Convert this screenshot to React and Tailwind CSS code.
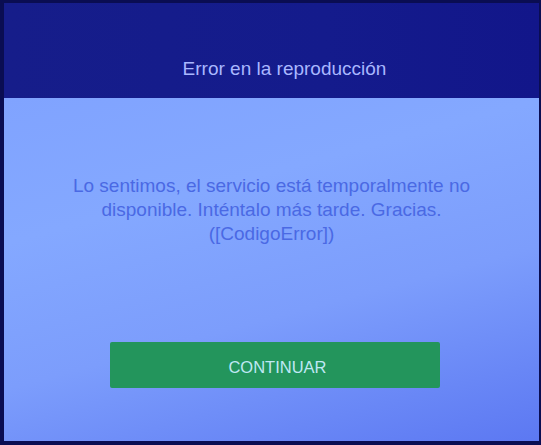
import React from "react";

export default function App() {
  return (
    <div
      className="h-[445px] w-[541px] bg-[#0a0d52] pt-[3px] pl-[4px] pr-[2px] pb-[4px] flex flex-col overflow-hidden"
      style={{ fontFamily: '"Liberation Sans", Arial, sans-serif' }}
    >
      <div className="h-[95px] bg-[linear-gradient(90deg,#161d8a_0%,#141b8c_60%,#12168a_100%)] flex items-end justify-center pb-[15px]">
        <h1 className="text-[19px] text-[#a9b7ff] ml-[26px]">
          Error en la reproducción
        </h1>
      </div>

      <div className="flex-1 flex flex-col items-center bg-[linear-gradient(165deg,#80a3ff_0%,#84a8ff_30%,#7c9dfc_60%,#5c78f2_100%)]">
        <p className="mt-[76px] w-[440px] text-center text-[19px] leading-[24px] text-[#4a69e4]">
          Lo sentimos, el servicio está temporalmente no disponible. Inténtalo más tarde. Gracias. ([CodigoError])
        </p>

        <button className="mt-[96px] ml-[6px] w-[330px] h-[46px] rounded-[2px] bg-[#23955c] text-[16.5px] text-[#bfe8f4] flex items-center justify-center pt-[4px] pl-[6px]">
          CONTINUAR
        </button>
      </div>
    </div>
  );
}
